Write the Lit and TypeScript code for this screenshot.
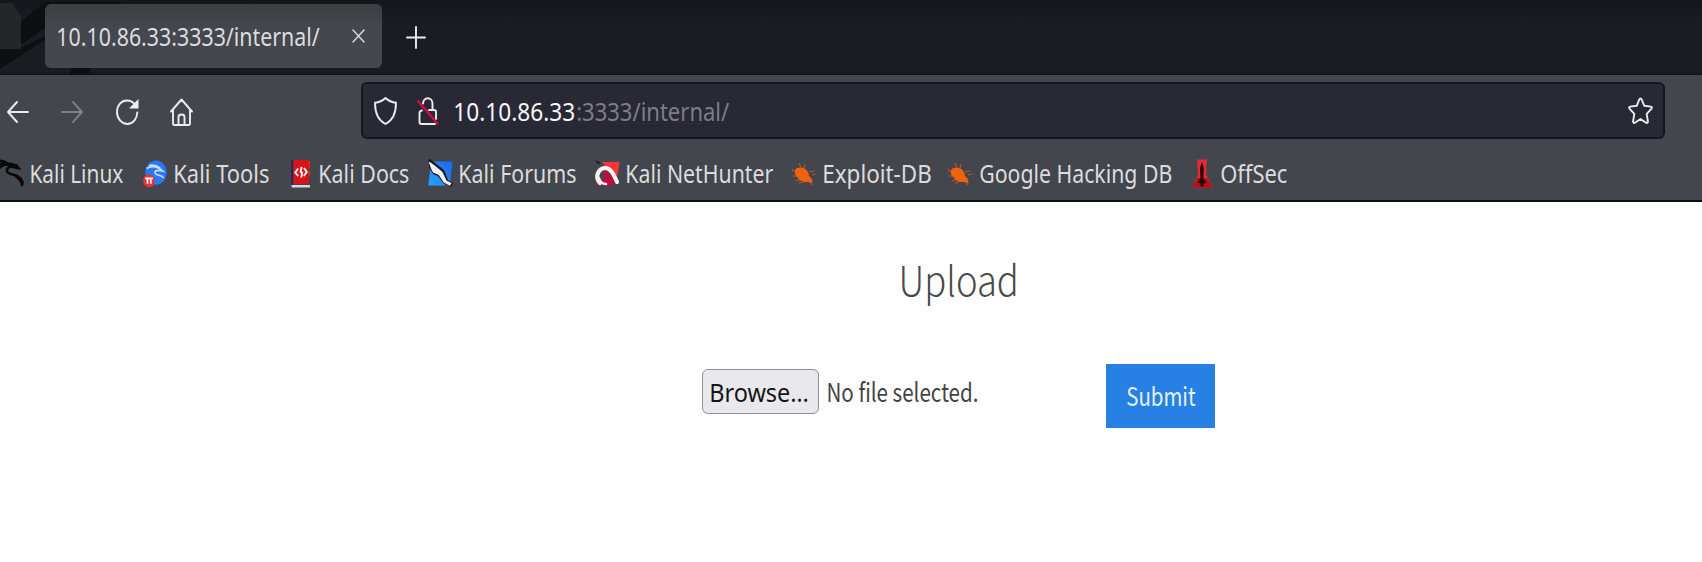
import { LitElement, html, svg, css } from "lit";
import { customElement, property, query } from "lit/decorators.js";

// Single line of text whose inked width is fitted to an exact measure.
@customElement("fit-text")
class FitText extends LitElement {
  static styles = css`
    :host { display: block; flex: none; white-space: pre; }
    .ink { display: inline-block; transform-origin: 0 0; }
  `;
  @property() text = "";
  @property({ type: Number }) measure = 100;
  @query(".ink") ink!: HTMLElement;

  updated() {
    const cs = getComputedStyle(this);
    const ctx = document.createElement("canvas").getContext("2d")!;
    ctx.font = `${cs.fontWeight} ${cs.fontSize} ${cs.fontFamily}`;
    const m = ctx.measureText(this.text);
    const k = this.measure / (m.actualBoundingBoxLeft + m.actualBoundingBoxRight);
    this.style.width = `${this.measure}px`;
    this.ink.style.transform = `translateX(${m.actualBoundingBoxLeft * k}px) scaleX(${k})`;
  }

  render() {
    return html`<span class="ink">${this.text}</span>`;
  }
}

const bug = svg`
  <g fill="none" stroke="#b9562a" stroke-width="1.1">
    <path d="M9 9 7 4M12 9l1-4M17 13l5-1M20 16l4-1M5 12H1l-1-2M6 17H1M9 20l-5 2M13 22l-6 2M18 23l2 3"/>
  </g>
  <path fill="#f0610f" d="M3 12c0-3 4-4 6-3 4-1 8 4 8 8l3 3 .5 4-5-1c-5 0-9-2-10-5-2-1-3-4-2.500-6z"/>`;

const icons: Record<string, unknown> = {
  dragon: svg`
    <path fill="none" stroke="#08090b" stroke-width="2.600" stroke-linecap="round" d="M7 5c5-1 9 1 11 3M15 8c-5-1-7.500 1-7 4 1 4.500 8 2.500 12 6 3 2.500 3.500 4.500 3 8"/>
    <path fill="#08090b" d="M0 .5c4 0 8 1.500 10 4l8 .5 4.500 6-6-1-6-3-5 0-6 4 2-4-2 0v-2l3-1-3-1.500zM15 17l7 1 3 5-1.500 5-1.500-3-2-3z"/>`,
  tools: svg`
    <ellipse cx="12.900" cy="13.600" rx="10.600" ry="12.200" fill="#2878fb"/>
    <path fill="none" stroke="#c6dfff" stroke-width="1.700" d="M3.500 9.500c5-3 10-3 16 2.500-5-1-8-.5-7.500 2 1 3 7 1.500 8.500 5M6 6.500c4-1 8 0 11 2.500"/>
    <ellipse cx="6" cy="21.800" rx="5.800" ry="6.500" fill="#ee3035"/>
    <path fill="none" stroke="#fff" stroke-width="1.700" d="M2.200 19.300h7.800M4.500 19v5.800M7.800 19v5.800"/>`,
  docs: svg`
    <path fill="#d91418" d="M4 1h17v24H4z"/><path fill="#26235a" d="M3.300 1h2v25h-2z"/>
    <path fill="#c83b20" d="M21 2h1v7h-1zM21 12h1v5h-1z"/>
    <path fill="#d9d7df" d="M3.300 26H22v2.400H4z"/>
    <path fill="none" stroke="#fff" stroke-width="1.800" d="m10.200 9.500-3 4 3 3.500M16 9l2.800 4-3 4M13.600 8l-1 5 1.600.7-1 4.800"/>`,
  forums: svg`
    <defs><linearGradient id="f" x1="1" y1="0" x2="0" y2="1"><stop stop-color="#1f62f4"/><stop offset="1" stop-color="#25a5fd"/></linearGradient></defs>
    <path fill="url(#f)" d="M6 2.500h18.600L22 24l-1 2.500H.3L2 12z"/>
    <path fill="#15171d" d="m.5 0 3 1 6 5 6.500 5 4 10 5 3-2 4-7-3-6-8-5-2-4-7z"/>
    <path fill="#f4f2f1" d="m.7 3 2 .5L8 7.500l6.500 5.500 4 8.500 5 2.500-1.500 2.700-6-3-5.500-8L5 13.500l-2-4z"/>`,
  nethunter: svg`
    <path fill="#fb353a" d="M7 3h17.500l-1.500 10-2 8-9-11z"/>
    <path fill="#c40b4a" d="M2 20h18l-2 6.500H1.500z"/>
    <path fill="#17181d" d="m0 1 6 3-3 1zM20 18l4 6-2 2z"/>
    <path fill="none" stroke="#f5f3f3" stroke-width="4.200" stroke-linecap="round" d="M5 24C-.5 18 3 9.500 10 9c6 0 9 7 12 14"/>
    <path fill="none" stroke="#f5f3f3" stroke-width="2.500" stroke-linecap="round" d="M4 19c1 4 4 6 7 6"/>
    <path fill="#c20c36" d="M8 14c3-4 5-1 7 2l5 8h-6l1.500-1.500L9 17z"/>`,
  bug,
  offsec: svg`
    <path fill="#e52a30" d="M8 .5h10l-1 14.500 6.500 13.500h-20L9 15z"/>
    <path fill="#b61017" d="m8 19-4.500 9.500h20L18 19z"/>
    <path fill="#250609" d="m13 3 1.800 6-.3 11 3 3.500-3 1v3h-3v-3l-3-1 3-4.500-.5-10z"/>`,
};

const bookmarks: [string, string, number, number][] = [
  ["dragon", "Kali Linux", 92.5, 143.5],
  ["tools", "Kali Tools", 94, 145],
  ["docs", "Kali Docs", 89, 140.5],
  ["forums", "Kali Forums", 116, 166.5],
  ["nethunter", "Kali NetHunter", 146.5, 197.5],
  ["bug", "Exploit-DB", 107, 156],
  ["bug", "Google Hacking DB", 191.5, 241],
  ["offsec", "OffSec", 66, 100],
];

@customElement("app-root")
class AppRoot extends LitElement {
  static styles = css`
    :host { display: block; width: 1702px; height: 562px; overflow: hidden; background: #fff;
      font: 400 26px/36px "Noto Sans", sans-serif; color: #dcdcdf; }
    * { box-sizing: border-box; }
    svg { display: block; flex: none; overflow: visible; }
    .line { fill: none; stroke: #ececee; stroke-width: 1.9; stroke-linejoin: round; stroke-linecap: round; }
    .thin { stroke-width: 1.5; stroke: #d8d8da; }
    .dim { stroke: #7e8086; }
    .slash { stroke: #d70d3f; stroke-width: 2.2; }
    .tabs { display: grid; grid-template-columns: 45px 337px 1fr; height: 75px; background: linear-gradient(#15161a, #1b1c21 20px, #1b1c21 72px, #111216); }
    .tab { display: flex; align-items: center; justify-content: space-between; height: 64px; margin-top: 4px; padding: 0 17px 0 13px;
      border-radius: 6px; background: linear-gradient(#3d3e43, #44474d 24px); }
    .plus { margin: 27px 0 0 24px; }
    .chrome { height: 127px; background: #44464d; border-bottom: 2px solid #0b0b0e; }
    .nav { display: flex; align-items: flex-start; height: 72px; padding: 7px 37px 0 7px; }
    .buttons { display: flex; align-items: center; width: 354px; height: 59px; }
    .back { margin-right: 33px; } .fwd { margin-right: 33px; } .reload { margin-right: 31px; }
    .url { display: flex; flex: 1; align-items: center; height: 57px; border: 2px solid #16171c; border-radius: 6px;
      background: #282935; padding: 0 10px 0 11px; }
    .lock { margin: 0 17px 0 20px; }
    .host, .path { padding-top: 1px; }
    .host { color: #f7f7fa; margin-right: 2.500px; }
    .path { color: #7d7e85; }
    .star { margin-left: auto; }
    .marks { display: flex; align-items: center; height: 53px; margin-left: -1px; }
    .mark { display: flex; align-items: flex-start; gap: 8px; flex: none; height: 36px; }
    .mark svg { margin-top: 3px; }
    .mark fit-text { margin-top: -1px; }
    .page { padding-left: 702px; color: #444; font-family: "Noto Sans CJK SC", sans-serif; }
    .title { display: block; margin: 0 0 0 199.500px; padding-top: 46px; height: 162px; font-size: 41px; line-height: 60px; font-weight: 300; color: #4a4a4a; }
    .form { display: flex; align-items: flex-start; }
    .browse { flex: none; margin-top: 5px; width: 117px; height: 45px; padding: 0 0 0 8px; border: 1.5px solid #8f8f9d; border-radius: 6px;
      background: #e9e9ed; color: #151515; font: 400 26px/40px "Noto Sans", sans-serif; }
    .none { margin: 9px 129px 0 8.500px; font-size: 26px; font-weight: 400; }
    .submit { flex: none; width: 108.500px; height: 63.500px; border: 0; padding: 0 0 0 20.500px; background: #2780e3; color: #e6f1ff;
      font: 400 25.500px/60px "Noto Sans CJK SC", sans-serif; }
    .submit fit-text { margin-top: -2px; }
  `;

  render() {
    return html`
      <div class="tabs">
        <svg width="45" height="75">
          <path fill="#0e0f12" d="M0 38 45 2h80L45 28 0 60zM0 57 45 36v4L0 69zM72 68h20l-4 7H69z"/>
          <path fill="#24262a" d="M0 3h12l9 13v33H0z"/>
        </svg>
        <div class="tab">
          <fit-text text="10.10.86.33:3333/internal/" measure="262"></fit-text>
          <svg width="13" height="16"><path class="line thin" d="m1 2 11 12M12 2 1 14"/></svg>
        </div>
        <svg class="plus" width="20" height="22"><path class="line" d="M10 0v21M1 10.500h18"/></svg>
      </div>
      <div class="chrome">
        <div class="nav">
          <div class="buttons">
            <svg class="back" width="22" height="22"><path class="line" d="M21 11H1M10 1 1 11l9 10"/></svg>
            <svg class="fwd" width="21" height="22"><path class="line dim" d="M0 11h20M11 1l9 10-9 10"/></svg>
            <svg class="reload" width="23" height="26"><path class="line" d="M21.300 13.500C21 20 17 25 11.500 25S1 20 1 13 5.500 1.500 11 1.500c3 0 5.500 1 7.500 3.500"/><path fill="#f0f0f2" d="M22.500 0v9.500H13z"/></svg>
            <svg width="23" height="28"><path class="line" d="m1 13.500 10.500-12L22 13.500M3 11.500v13.700q0 1.800 1.500 1.800h14q1.500 0 1.500-1.800V11.500M8.500 26.500V19q0-2.500 3-2.500t3 2.500v7.500"/></svg>
          </div>
          <div class="url">
            <svg width="23" height="28"><path class="line" d="M11.500 1c3 2.800 6 4.300 10.500 4.800 0 9-2 17-10.500 21.200C3 22.800 1 14.800 1 5.800 5.500 5.300 8.500 3.800 11.500 1z"/></svg>
            <svg class="lock" width="21" height="28">
              <path class="line" d="M6 6.500c0-7 9.500-7 9.500 0V13M12 13h5q2 0 2 2v7M5 13.500q-2.500.5-2.500 2.500v9q0 2 2 2H18"/>
              <path class="line slash" d="m1 4 19.500 22.500"/>
            </svg>
            <fit-text class="host" text="10.10.86.33" measure="119.5"></fit-text>
            <fit-text class="path" text=":3333/internal/" measure="152.5"></fit-text>
            <svg class="star" width="25" height="28"><path class="line" d="M12.500 1.500q.8 0 1.200 1l2.600 6.300 6.500.8q1.800.5.700 2l-4.800 5.200 1.200 7.700q0 2-1.800 1.200l-5.600-3.700-5.600 3.700q-1.800.8-1.800-1.200l1.200-7.700L1.500 11.600q-1.100-1.500.7-2l6.500-.8 2.600-6.300q.4-1 1.200-1z"/></svg>
          </div>
        </div>
        <div class="marks">
          ${bookmarks.map(([icon, label, ink, pitch]) => html`
            <div class="mark" style="width:${pitch}px">
              <svg width="24" height="28" viewBox="0 0 24 28">${icons[icon]}</svg>
              <fit-text text=${label} measure=${ink}></fit-text>
            </div>`)}
        </div>
      </div>
      <div class="page">
        <fit-text class="title" text="Upload" measure="113.5"></fit-text>
        <div class="form">
          <button class="browse"><fit-text text="Browse…" measure="96.5"></fit-text></button>
          <fit-text class="none" text="No file selected." measure="149.5"></fit-text>
          <button class="submit"><fit-text text="Submit" measure="69"></fit-text></button>
        </div>
      </div>`;
  }
}
